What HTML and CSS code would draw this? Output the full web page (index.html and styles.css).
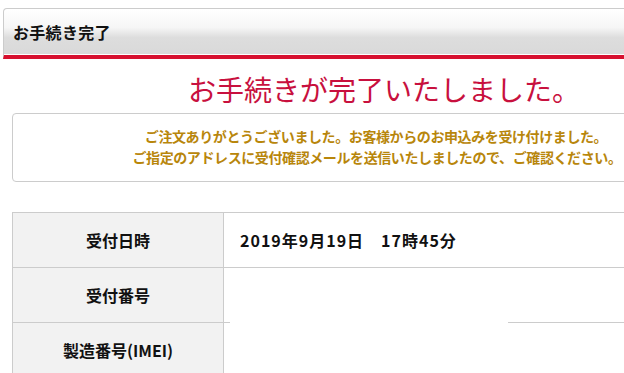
FILE: index.html
```html
<html>
<head>
    <meta charset="UTF-8">
    <meta name="viewport" content="width=device-width, initial-scale=1.0">
    <title>お手続き完了</title>
    <link rel="stylesheet" href="styles.css">
</head>
<body>

<div class="page">
    <div class="titlebar">お手続き完了</div>

    <div class="content">
        <h1 class="done">お手続きが完了いたしました。</h1>

        <div class="notice">
            <p class="first">ご注文ありがとうございました。お客様からのお申込みを受け付けました。</p>
            <p>ご指定のアドレスに受付確認メールを送信いたしましたので、ご確認ください。</p>
        </div>

        <div class="info">
            <div class="label">受付日時</div>
            <div class="value">2019年9月19日　17時45分</div>
            <div class="label">受付番号</div>
            <div class="value"></div>
            <div class="label">製造番号(IMEI)</div>
            <div class="value"></div>
            <div class="mask"></div>
        </div>
    </div>
</div>

</body>
</html>
```

FILE: styles.css
```css
* {
    margin: 0;
    padding: 0;
    box-sizing: border-box;
}
html, body {
    overflow: hidden;
}
body {
    font-family: "Noto Sans CJK JP", "Liberation Sans", sans-serif;
    background-color: white;
    color: #111;
}
.page {
    width: 762px;
    margin-left: 3px;
    padding-top: 8px;
}
.titlebar {
    height: 51px;
    line-height: 46px;
    padding-left: 9px;
    font-size: 16px;
    font-weight: bold;
    letter-spacing: 0.3px;
    border: 1px solid #ccc;
    border-bottom: 4px solid #d7102f;
    border-radius: 4px 4px 0 0;
    background: linear-gradient(#ffffff 0%, #f6f6f6 40%, #dddddd 62%, #d9d9d9 100%);
    box-shadow: inset 0 -1px 0 #fff;
}
.content {
    padding: 0 9px;
}
.done {
    margin-top: 10px;
    font-size: 28px;
    font-weight: normal;
    line-height: 40px;
    text-align: center;
    color: #c8103e;
}
.notice {
    margin-top: 4px;
    height: 69px;
    padding-top: 12px;
    padding-right: 14px;
    border: 1px solid #ccc;
    border-radius: 4px;
    text-align: center;
    color: #b8860b;
    font-size: 14px;
    font-weight: bold;
    letter-spacing: -0.4px;
    line-height: 21px;
    white-space: nowrap;
}
.notice .first {
    padding-right: 2px;
}
.info {
    position: relative;
    margin-top: 30px;
    display: grid;
    grid-template-columns: 211px 1fr;
    grid-auto-rows: 55px;
    border-top: 1px solid #ccc;
    border-left: 1px solid #ccc;
    font-size: 16px;
    font-weight: bold;
}
.label, .value {
    display: flex;
    align-items: center;
    border-right: 1px solid #ccc;
    border-bottom: 1px solid #ccc;
}
.label {
    justify-content: center;
    background-color: #f2f2f2;
}
.value {
    padding-left: 16px;
    letter-spacing: 1px;
}
.mask {
    position: absolute;
    left: 217px;
    top: 100px;
    width: 278px;
    height: 20px;
    background: white;
}
```
